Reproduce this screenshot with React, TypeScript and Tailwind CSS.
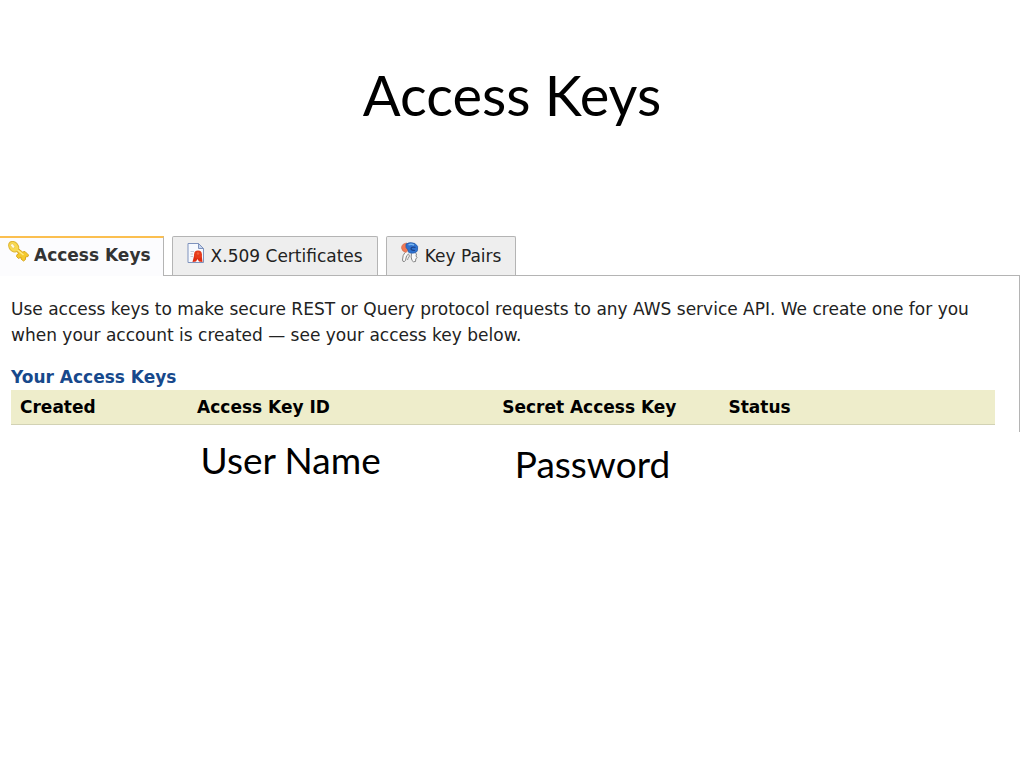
import { useState } from "react";

const COLUMNS = [
  { label: "Created", width: "w-[18%]" },
  { label: "Access Key ID", width: "w-[31%]" },
  { label: "Secret Access Key", width: "w-[23%]" },
  { label: "Status", width: "w-[28%]" },
];

function KeyIcon() {
  return (
    <svg width="22" height="22" viewBox="0 0 22 22" aria-hidden="true">
      <path d="M9.500 7 L14.500 11 L17 10.500 L20.500 14 L20 15.500 L17.500 16 L17.500 18.500 L15.500 20 L13 18 L13 16 L10.500 17.500 L8.500 15.500 L9 13.500 L11 12.500 L7.500 9.500 Z" fill="#f5c92c" stroke="#d9a820" strokeWidth="1" strokeLinejoin="round" />
      <ellipse cx="5.700" cy="5.700" rx="5.800" ry="4.500" transform="rotate(50 5.700 5.700)" fill="#f8da50" stroke="#dfb534" strokeWidth="1" />
      <ellipse cx="4.700" cy="5" rx="2.600" ry="1.600" transform="rotate(50 4.700 5)" fill="#fffbe2" stroke="#e6bd3f" strokeWidth="0.600" />
      <path d="M9.500 9 L15.500 14" stroke="#ffea85" strokeWidth="1.500" />
    </svg>
  );
}

function CertificateIcon() {
  return (
    <svg width="18" height="22" viewBox="0 0 18 22" aria-hidden="true">
      <path d="M1 1.500 H11.500 L16.500 6.500 V20.500 H1 Z" fill="#f6f9fe" stroke="#7f93bd" />
      <path d="M11.500 1.500 V6.500 H16.500 Z" fill="#c6d5ef" stroke="#7f93bd" strokeLinejoin="round" />
      <path d="M3.500 9.500 H7 M3.500 12 H6 M3.500 14.500 H6" stroke="#c2cad8" />
      <path d="M7.500 12 L5.500 20 L9 19.500 L10.500 17 L12 19.500 L15.500 20 L14.500 12 Z" fill="#dd2c12" />
      <circle cx="11" cy="12.500" r="3.900" fill="#e53b1b" />
      <circle cx="11" cy="11.500" r="1.300" fill="#f0603a" />
    </svg>
  );
}

function KeyPairIcon() {
  return (
    <svg width="18" height="22" viewBox="0 0 18 22" aria-hidden="true">
      <path d="M4 10.500 Q1.500 13 1.500 18 Q1.500 20 3.500 19.500 Q5 18.500 5 16 Q5 13.500 7.500 12" fill="#fafafa" stroke="#858585" />
      <path d="M10.500 11.500 Q9.500 15 11 18.500 Q12 20.500 14.500 19.500 L14.800 17 L16 15.500 L15 14 L15.500 12 L14 10.500" fill="#fafafa" stroke="#858585" />
      <path d="M7.500 12 L8.500 14 L7 16.500 L6.500 18" fill="none" stroke="#999" />
      <path d="M6 1 Q0.500 1.500 0.500 6 Q1 9.500 5 10.500 L8 7 Z" fill="#f27a55" stroke="#c9674c" strokeWidth="0.600" />
      <path d="M5 2 Q9 -0.500 14 1.500 Q18 4 16.500 8.500 Q15 12 9 11 Q6.500 10.500 7 8 Q4 6 5 2 Z" fill="#2f72cf" stroke="#24539b" strokeWidth="0.600" />
      <path d="M7.500 3 Q10 1.500 13 3" fill="none" stroke="#77b5f2" strokeWidth="1.400" />
      <path d="M14.500 5.500 Q10.500 4.500 10 6.500 Q10 8.500 14 8.500" fill="none" stroke="#1c438b" strokeWidth="1.200" />
    </svg>
  );
}

const TABS = [
  { id: "access", label: "Access Keys", icon: <KeyIcon /> },
  { id: "x509", label: "X.509 Certificates", icon: <CertificateIcon /> },
  { id: "pairs", label: "Key Pairs", icon: <KeyPairIcon /> },
];

export default function App() {
  const [tab, setTab] = useState("access");

  return (
    <main className="min-h-screen bg-white font-['Lato',sans-serif] text-black">
      <h1 className="pt-[63px] text-center text-[56px] leading-[64px]">Access Keys</h1>

      <section className="mt-[109px] mr-1 font-['DejaVu_Sans',sans-serif] text-[17px]">
        <div role="tablist" className="flex gap-2 border-b border-[#b4b4b4]">
          {TABS.map((t) => (
            <button
              key={t.id}
              role="tab"
              id={`tab-${t.id}`}
              aria-selected={tab === t.id}
              aria-controls="panel"
              onClick={() => setTab(t.id)}
              className={
                tab === t.id
                  ? "-mb-px flex h-10 items-start gap-1 border-t-2 border-r border-t-[#fbbf50] border-r-[#b4b4b4] bg-[#fcfcfe] pt-[3px] pr-3 pl-2 font-bold text-[#333]"
                  : "flex h-[39px] items-start gap-[6px] rounded-t-xs border border-b-0 border-[#b4b4b4] bg-[#eee] px-[14px] pt-[5px] text-[#222]"
              }
            >
              {t.icon}
              <span className="leading-7">{t.label}</span>
            </button>
          ))}
        </div>

        <div id="panel" role="tabpanel" aria-labelledby={`tab-${tab}`} className="border-r border-[#b4b4b4] pt-5 pr-6 pb-[7px] pl-[11px]">
          <p className="leading-[26px] text-[#222]">
            Use access keys to make secure REST or Query protocol requests to any AWS service API. We create one for you
            when your account is created — see your access key below.
          </p>
          <h2 id="keys-title" className="mt-4 leading-[26px] font-bold text-[#17498c]">Your Access Keys</h2>
          <table aria-labelledby="keys-title" className="w-full table-fixed border-b border-[#d2d2b4] bg-[#eeedcb]">
            <thead>
              <tr>
                {COLUMNS.map((c) => (
                  <th key={c.label} scope="col" className={`${c.width} h-[34px] px-[9px] pt-[2px] text-left font-bold whitespace-nowrap`}>
                    {c.label}
                  </th>
                ))}
              </tr>
            </thead>
          </table>
        </div>
      </section>

      {/* What each column stands for */}
      <div className="mr-7 ml-[14px] flex text-[37px] leading-[44px]">
        <p className="ml-[19%] w-[32%] pt-[6px]">User Name</p>
        <p className="pt-[10px]">Password</p>
      </div>
    </main>
  );
}
